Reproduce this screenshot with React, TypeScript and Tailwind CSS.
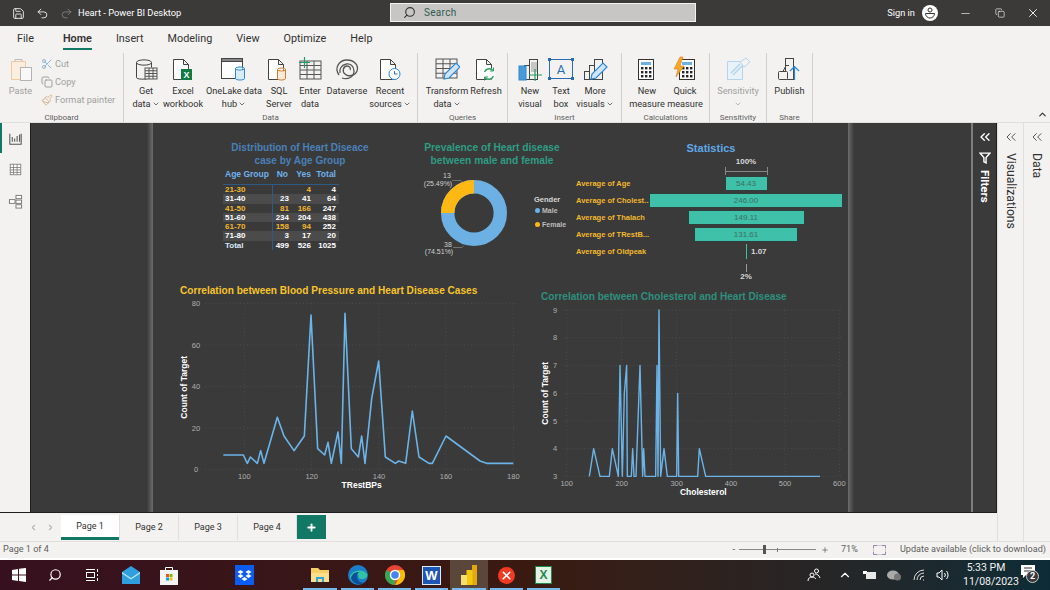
import React from 'react';
import { ChevronDown, ChevronUp, ChevronLeft, ChevronRight, ChevronsLeft, Copy, Minus, Paintbrush, Plus, Redo2, Save, Scissors, Search, Undo2, X } from 'lucide-react';

const ui = "font-['Roboto',sans-serif]";
const INK = '#323130';

/* ---------- ribbon icons ---------- */
const Ic: React.FC<{ children: React.ReactNode; w?: number }> = ({ children, w = 26 }) => (
  <svg width={w} height="26" viewBox={`0 0 ${w} 26`} fill="none" stroke="#444" strokeWidth="1">
    {children}
  </svg>
);

const Grid3 = ({ x, y, w, h, c = '#555' }: { x: number; y: number; w: number; h: number; c?: string }) => (
  <g stroke={c}>
    <rect x={x} y={y} width={w} height={h} fill="#f3f2f1" />
    {[1, 2, 3].map((i) => <line key={i} x1={x} x2={x + w} y1={y + (h * i) / 4} y2={y + (h * i) / 4} />)}
    {[1, 2].map((i) => <line key={i} x1={x + (w * i) / 3} x2={x + (w * i) / 3} y1={y} y2={y + h} />)}
  </g>
);
const Doc = ({ x = 4, s = '#444' }: { x?: number; s?: string }) => (
  <path d={`M${x + .5} 3.5h10l5 5v15h-15zM${x + 10.5} 3.5v5h5`} stroke={s} fill="#fff" />
);
const Pencil = ({ x = 0, y = 0 }: { x?: number; y?: number }) => (
  <g transform={`translate(${x} ${y})`}>
    <path d="M3 20l1-5L15 4l4 4L8 19z" fill="#cfe4f7" stroke="#2b88d8" strokeWidth="1.2" />
  </g>
);
const Bars = () => (
  <g>
    <rect x="12.5" y="3.5" width="8" height="20" fill="#f3f2f1" />
    <rect x="7.5" y="9.5" width="5" height="14" fill="#f3f2f1" />
    <rect x="2.5" y="15.5" width="5" height="8" fill="#f3f2f1" />
  </g>
);
const Calc = ({ x = 6 }: { x?: number }) => (
  <g>
    <rect x={x + .5} y="3.5" width="15" height="20" fill="#fff" stroke="#333" />
    <rect x={x + 3} y="6" width="10" height="3" fill="#6cb0e4" stroke="none" />
    {[0, 1, 2].map((r) => [0, 1, 2].map((c) => <rect key={`${r}${c}`} x={x + 3 + c * 4} y={11 + r * 4} width="2.4" height="2.4" fill="#222" stroke="none" />))}
  </g>
);

const icons: Record<string, React.ReactNode> = {
  getData: <Ic><path d="M3.500 6.500v15c0 2 9 2 11 1M3.500 6.500c0-3.500 15-3.500 15 0s-15 3.500-15 0M18.500 6.500v5" /><Grid3 x={12} y={12} w={12} h={11} /></Ic>,
  excel: <Ic><Doc x={3} /><rect x="11" y="13" width="11" height="11" fill="#107c41" stroke="none" /><text x="16.500" y="22" textAnchor="middle" fontSize="9" fontWeight="700" fill="#fff" stroke="none" fontFamily="Liberation Sans">X</text></Ic>,
  onelake: <Ic w={30}><rect x="2.500" y="2.500" width="21" height="20" fill="#fff" /><rect x="2.500" y="2.500" width="21" height="3" fill="#888" stroke="#444" /><path d="M16.500 12.500v10c0 2 9 2 9 0v-10M16.500 12.500c0-2 9-2 9 0s-9 2-9 0" fill="#d9ecfa" stroke="#2b88d8" /></Ic>,
  sql: <Ic><Doc x={2} /><path d="M11.500 13.500v9c0 2 8 2 8 0v-9M11.500 13.500c0-2 8-2 8 0s-8 2-8 0" fill="#fdeadb" stroke="#d87a2b" /></Ic>,
  enter: <Ic><Grid3 x={3} y={5} w={21} h={18} /><path d="M7.500 1v11M2 6.500h11" stroke="#1f9e5f" strokeWidth="1.200" /></Ic>,
  dataverse: <Ic><g stroke="#555" strokeWidth="1.300"><path d="M5 19C0 12 5 4 13 4c7 0 12 5 10 11-2 5-9 6-12 3-3-2-2-8 2-8 3 0 4 3 3 4" /><path d="M8 22c6 2 12-1 12-7 0-5-4-8-8-7-5 1-7 6-6 9" /></g></Ic>,
  recent: <Ic><Doc x={3} /><circle cx="17.500" cy="18" r="5.500" fill="#fff" stroke="#2b88d8" /><path d="M17.500 15v3h3" stroke="#2b6cb0" /></Ic>,
  transform: <Ic><Grid3 x={2} y={3} w={21} h={19} /><Pencil x={7} y={3} /></Ic>,
  refresh: <Ic><Doc x={3} /><circle cx="16" cy="18" r="6" fill="#fff" stroke="none" /><path d="M11.500 16a5 5 0 0 1 8.500-1.500M20.500 20a5 5 0 0 1-8.500 1.500" stroke="#2e9e5b" strokeWidth="1.400" /><path d="M20.500 11.500v3.500H17M11.500 24.500V21H15" stroke="#2e9e5b" /></Ic>,
  newVisual: <Ic><Bars /><rect x="2" y="10" width="7" height="14" fill="#4a9ad8" stroke="#2b88d8" /><rect x="14" y="6" width="6" height="10" fill="#c8c6c4" stroke="none" /><path d="M18 13v12M12 19h13" stroke="#1f9e5f" strokeWidth="1.200" /></Ic>,
  textBox: <Ic><rect x="1.500" y="3.500" width="23" height="19" stroke="#2b6cb0" fill="#f3f2f1" />{[[1.500, 3.500], [24.500, 3.500], [1.500, 22.500], [24.500, 22.500]].map(([a, b]) => <rect key={`${a}${b}`} x={a - 1.500} y={b - 1.500} width="3" height="3" fill="#2b6cb0" stroke="none" />)}<text x="13" y="18" textAnchor="middle" fontSize="13" fill="#2b6cb0" stroke="none" fontFamily="Roboto">A</text></Ic>,
  moreVisuals: <Ic><Bars /><Pencil x={6} y={3} /></Ic>,
  newMeasure: <Ic><Calc x={4} /></Ic>,
  quickMeasure: <Ic><Calc x={7} /><path d="M8 1L2 13h4l-2 8 8-11H8l3-9z" fill="#f7a823" stroke="#d87a2b" strokeWidth=".6" /></Ic>,
  sensitivity: <Ic><path d="M2.500 5.500h15v18h-15z" stroke="#b5d4ec" fill="#eaf2f9" /><path d="M6 17l9-9M8 19l9-9" stroke="#b5d4ec" strokeWidth="1.500" /><path d="M15 6l6-4 4 4-6 5z" stroke="#b5d4ec" fill="#f3f2f1" /></Ic>,
  publish: <Ic><rect x="8.500" y="2.500" width="8" height="21" fill="#f3f2f1" /><rect x="1.500" y="15.500" width="9" height="8" rx="1" fill="#f3f2f1" /><path d="M6 15.500l3-6h3" /><path d="M17.500 24V11M13 15l4.500-4.500L22 15" stroke="#2b88d8" strokeWidth="1.200" /></Ic>,
};

interface ItemProps { w: number; icon: string; lines: string[]; chev?: boolean; disabled?: boolean }
const RibbonItem: React.FC<ItemProps> = ({ w, icon, lines, chev, disabled }) => (
  <div style={{ width: w }} className="flex flex-col items-center shrink-0">
    <div className="h-[30px] flex items-start justify-center pt-[3px]">{icons[icon]}</div>
    <div className={`mt-px flex flex-col items-center text-[9.200px] leading-[13px] whitespace-nowrap ${disabled ? 'text-[#a19f9d]' : 'text-[#323130]'}`}>
      {lines.map((l, i) => (
        <span key={i} className="flex items-center gap-[1px] h-[13px]">
          {l}
          {chev && i === lines.length - 1 && <ChevronDown size={8} strokeWidth={2} />}
        </span>
      ))}
    </div>
  </div>
);

const RibbonGroup: React.FC<{ w: number; pl?: number; label: string; children: React.ReactNode }> = ({ w, pl = 0, label, children }) => (
  <div style={{ width: w }} className="shrink-0 h-[69px] border-r border-[#d2d0ce] flex flex-col">
    <div style={{ paddingLeft: pl }} className="flex flex-1 min-h-0">{children}</div>
    <div className="text-center text-[8px] leading-[11px] text-[#605e5c] -mb-px">{label}</div>
  </div>
);

/* ---------- report visuals ---------- */
const rows: [string, string, string, string, boolean][] = [
  ['21-30', '', '4', '4', true],
  ['31-40', '23', '41', '64', false],
  ['41-50', '81', '166', '247', true],
  ['51-60', '234', '204', '438', false],
  ['61-70', '158', '94', '252', true],
  ['71-80', '3', '17', '20', false],
];

const AgeTable = () => (
  <div className="w-[116px] text-[8px] font-bold leading-[9.250px] text-white">
    <div className="h-[10px] flex text-[8.500px] leading-[10px] text-[#6fb1ea]">
      <div className="w-[50px] pl-[2px] whitespace-nowrap">Age Group</div>
      <div className="w-[17px] text-right pr-[2px]">No</div>
      <div className="w-[22px] text-right pr-[1px]">Yes</div>
      <div className="w-[27px] text-right pr-[3px]">Total</div>
    </div>
    <div className="mt-[5px] border-t border-[#2d5a86]">
      {rows.map(([age, no, yes, total, warm], i) => (
        <div key={age} className={`h-[9.250px] flex ${i % 2 === 1 ? 'bg-[#4b4b4b]' : ''}`}>
          <div className={`w-[50px] pl-[2px] border-r border-[#2d5a86] ${warm ? 'text-[#f2b72e]' : ''}`}>{age}</div>
          <div className={`w-[17px] text-right pr-[1px] ${warm ? 'text-[#f2b72e]' : ''}`}>{no}</div>
          <div className={`w-[22px] text-right pr-[1px] ${warm ? 'text-[#f2b72e]' : ''}`}>{yes}</div>
          <div className="w-[27px] text-right pr-[3px]">{total}</div>
        </div>
      ))}
      <div className="h-[9.250px] flex">
        <div className="w-[50px] pl-[2px] border-r border-[#2d5a86] text-[#d7e9f8]">Total</div>
        <div className="w-[17px] text-right pr-[1px]">499</div>
        <div className="w-[22px] text-right pr-[1px]">526</div>
        <div className="w-[27px] text-right pr-[3px]">1025</div>
      </div>
    </div>
  </div>
);

const Donut = () => (
  <svg width="150" height="100" viewBox="0 0 150 100" className="font-['Liberation_Sans',sans-serif]">
    <circle cx="54" cy="46" r="26.300" fill="none" stroke="#6cb0e4" strokeWidth="13.400" />
    <path d="M27.700 46A26.300 26.300 0 0 1 54 19.700" fill="none" stroke="#fdb813" strokeWidth="13.400" />
    <path d="M32 13.500h9l2 2M33 80.500h9l2-2" fill="none" stroke="#8a8a8a" strokeWidth=".7" />
    <g fontSize="7" fill="#cfcfcf" textAnchor="middle">
      <text x="27" y="11">13</text>
      <text x="18" y="19">(25.49%)</text>
      <text x="28" y="80">38</text>
      <text x="19" y="87">(74.51%)</text>
    </g>
    <text x="114" y="34.500" fontSize="7.500" fontWeight="700" fill="#d6d6d6">Gender</text>
    <circle cx="117.500" cy="43.500" r="2.500" fill="#6cb0e4" />
    <text x="122" y="46" fontSize="7" fontWeight="700" fill="#bdbdbd">Male</text>
    <circle cx="117.500" cy="57.500" r="2.500" fill="#fdb813" />
    <text x="122" y="60" fontSize="7" fontWeight="700" fill="#bdbdbd">Female</text>
  </svg>
);

const stats = [
  { label: 'Average of Age', width: 43, value: '54.43' },
  { label: 'Average of Cholest...', width: 194, value: '246.00' },
  { label: 'Average of Thalach', width: 117, value: '149.11' },
  { label: 'Average of TRestB...', width: 104, value: '131.61' },
  { label: 'Average of Oldpeak', width: 1, value: '1.07' },
];

const Funnel = () => (
  <div className="w-[270px] text-[8px] font-bold">
    <div className="pl-[73px] w-[267px]">
      <div className="text-center h-[11px] leading-[11px] text-[#d8d8d8]">100%</div>
      <div className="mx-auto w-[43px] h-[8px] border-x border-[#888] flex items-center"><div className="w-full h-px bg-[#888]" /></div>
    </div>
    <div className="mt-[1px] flex flex-col gap-[2px]">
      {stats.map((s) => (
        <div key={s.label} className="h-[15px] flex items-center">
          <div className="w-[73px] shrink-0 whitespace-nowrap text-[#f2b72e] text-[7.500px]">{s.label}</div>
          <div className="w-[194px] h-full flex justify-center relative">
            {s.width > 1 ? (
              <div style={{ width: s.width }} className="h-full bg-[#3fc0a8] border border-[#2f3f3c] flex items-center justify-center text-[#3c6f64] font-normal">{s.value}</div>
            ) : (
              <>
                <div className="w-px h-full bg-[#3fc0a8]" />
                <span className="absolute left-[102px] top-[2px] text-[#d8d8d8]">{s.value}</span>
              </>
            )}
          </div>
        </div>
      ))}
    </div>
    <div className="pl-[73px] w-[267px] mt-[5px] flex flex-col items-center">
      <div className="w-px h-[8px] bg-[#999]" />
      <div className="leading-[10px] text-[#d8d8d8]">2%</div>
    </div>
  </div>
);

interface ChartProps {
  w: number; h: number; dy: number; pts: number[][]; stroke: number;
  vx: number[]; hy: number[]; x0: number; x1: number;
  xl: string[]; yl: string[]; ylx: number; xly: number;
  title: string; tx: number; ty: number; side: number; sideY: number;
}

// all coords below are read off a 3x crop, hence the /3
const LineChart: React.FC<ChartProps> = (c) => (
  <svg width={c.w} height={c.h} viewBox={`0 0 ${c.w} ${c.h}`} className="font-['Liberation_Sans',sans-serif] shrink-0">
    <g stroke="#555" strokeWidth=".7" strokeDasharray="1 2.500">
      {c.hy.map((y) => <line key={y} x1={c.x0 / 3} x2={c.x1 / 3} y1={y / 3 - c.dy} y2={y / 3 - c.dy} />)}
      {c.vx.map((x) => <line key={x} x1={x / 3} x2={x / 3} y1={c.hy[0] / 3 - c.dy} y2={c.hy[c.hy.length - 1] / 3 - c.dy} />)}
    </g>
    <polyline points={c.pts.map(([x, y]) => `${x / 3},${y / 3 - c.dy}`).join(' ')} fill="none" stroke="#6cb4e8" strokeWidth={c.stroke} strokeLinejoin="round" />
    <g fontSize="7.500" fill="#b0b0b0">
      {c.yl.map((t, i) => <text key={t} x={c.ylx / 3} y={c.hy[i] / 3 - c.dy + 2.500} textAnchor="middle">{t}</text>)}
      {c.xl.map((t, i) => <text key={t} x={c.vx[i] / 3} y={c.xly / 3 - c.dy + 2.500} textAnchor="middle">{t}</text>)}
    </g>
    <text x={c.tx / 3} y={c.ty / 3 - c.dy + 3} fontSize="8.500" fontWeight="700" fill="#fff" textAnchor="middle">{c.title}</text>
    <text transform={`translate(${c.side / 3 + 3} ${c.sideY / 3 - c.dy}) rotate(-90)`} fontSize="8.500" fontWeight="700" fill="#fff" textAnchor="middle">Count of Target</text>
  </svg>
);

const bpPts = [[190, 525], [250, 525], [262, 550], [271, 531], [292, 550], [302, 512], [312, 550], [352, 412], [372, 468], [402, 512], [433, 468], [453, 105], [473, 506], [494, 525], [504, 487], [514, 550], [534, 456], [544, 550], [555, 100], [574, 506], [595, 531], [605, 468], [615, 550], [635, 356], [656, 243], [676, 531], [706, 550], [716, 543], [737, 550], [757, 393], [777, 531], [807, 550], [817, 550], [858, 468], [960, 543], [980, 550], [1060, 550]];
const cholPts = [[178, 574], [191, 491], [210, 574], [238, 574], [247, 491], [265, 574], [270, 241], [277, 574], [283, 325], [290, 241], [292, 574], [304, 574], [308, 491], [312, 574], [318, 574], [330, 241], [338, 574], [341, 491], [345, 574], [377, 574], [381, 241], [384, 574], [387, 75], [392, 574], [402, 491], [412, 574], [440, 574], [443, 325], [446, 574], [503, 574], [508, 491], [527, 574], [870, 574]];

const Fade = ({ flip }: { flip?: boolean }) => (
  <div className={`w-[6px] shrink-0 ${flip ? 'bg-gradient-to-r from-[#6e6e6e] to-[#3a3a3a]' : 'bg-gradient-to-r from-[#3a3a3a] to-[#6e6e6e]'}`} />
);

const Report = () => (
  <div className="w-[695px] shrink-0 flex flex-col">
    <div className="h-[160px] flex">
      <div className="ml-[70px] w-[154px] shrink-0 pt-[18px]">
        <div className="text-center text-[10px] font-bold leading-[13px] text-[#4a80b8] whitespace-nowrap">Distribution of Heart Diseace<br />case by Age Group</div>
        <div className="mt-[2px]"><AgeTable /></div>
      </div>
      <div className="ml-[43px] w-[150px] shrink-0 pt-[18px]">
        <div className="w-[144px] text-center text-[10.200px] font-bold leading-[13px] text-[#2f9c84] whitespace-nowrap">Prevalence of Heart disease<br />between male and female</div>
        <Donut />
      </div>
      <div className="ml-[6px] w-[270px] shrink-0 pt-[19px]">
        <div className="w-[270px] text-center text-[11px] font-bold leading-[13px] text-[#5fa8e8] mb-[1px]">Statistics</div>
        <Funnel />
      </div>
    </div>
    <div className="flex pl-[7px]">
      <div className="w-[370px] shrink-0 pt-px">
        <div className="h-[14px] pl-[20px] text-[10.100px] font-bold leading-[14px] text-[#f6c42c] whitespace-nowrap">Correlation between Blood Pressure and Heart Disease Cases</div>
        <LineChart w={370} h={202} dy={18} pts={bpPts} stroke={1.600}
          vx={[253, 455, 657, 858, 1060]} hy={[70, 195, 320, 444, 568]} x0={135} x1={1075}
          xl={['100', '120', '140', '160', '180']} yl={['80', '60', '40', '20', '0']} ylx={108} xly={590}
          title="TRestBPs" tx={605} ty={615} side={72} sideY={322} />
      </div>
      <div className="w-[318px] shrink-0 pt-[7px]">
        <div className="h-[14px] pl-[11px] text-[10.100px] font-bold leading-[14px] text-[#2e8f7d] whitespace-nowrap">Correlation between Cholesterol and Heart Disease</div>
        <LineChart w={318} h={199} dy={19} pts={cholPts} stroke={1.400}
          vx={[110, 275, 440, 603, 765, 928]} hy={[75, 158, 241, 325, 408, 491, 574]} x0={100} x1={940}
          xl={['100', '200', '300', '400', '500', '600']} yl={['9', '8', '7', '6', '5', '4', '3']} ylx={75} xly={595}
          title="Cholesterol" tx={520} ty={621} side={45} sideY={325} />
      </div>
    </div>
  </div>
);

/* ---------- taskbar ---------- */
const TaskSlot: React.FC<{ w: number; active?: boolean; running?: boolean; children: React.ReactNode }> = ({ w, active, running, children }) => (
  <div style={{ width: w }} className={`h-full shrink-0 flex items-center justify-center relative ${active ? 'bg-[#5b463c]' : ''}`}>
    {children}
    {running && <div className="absolute bottom-0 left-[2px] right-[2px] h-[2px] bg-[#76b9ed]" />}
  </div>
);

const TaskBar = () => (
  <div className={`h-[30px] flex items-stretch bg-gradient-to-r from-[#37101f] via-[#3a1a10] to-[#0b2c36] ${ui}`}>
    <TaskSlot w={37}>
      <svg width="14" height="14" viewBox="0 0 14 14" fill="#fff"><path d="M0 2l6-1v5.500H0zM7 .8L14 0v6.500H7zM0 7.500h6V13l-6-1zM7 7.500h7V14l-7-1z" /></svg>
    </TaskSlot>
    <TaskSlot w={36}><Search size={14} color="#fff" className="-scale-x-100" /></TaskSlot>
    <TaskSlot w={38}>
      <svg width="14" height="14" viewBox="0 0 14 14" fill="none" stroke="#fff"><rect x="1.500" y="4.500" width="8" height="5" /><path d="M1 1.500h9M1 12.500h9M12.500 1v3M12.500 6v2M12.500 10v3" /></svg>
    </TaskSlot>
    <TaskSlot w={39}>
      <svg width="20" height="20" viewBox="0 0 20 20"><path d="M1 7l9-6 9 6v12H1z" fill="#2f9fe0" /><path d="M1 7l9 6 9-6v1.500l-9 6-9-6z" fill="#bfe3f7" /></svg>
    </TaskSlot>
    <TaskSlot w={38}>
      <svg width="18" height="20" viewBox="0 0 18 20"><path d="M5.500 5V2.500h7V5" fill="none" stroke="#fff" /><rect x="0" y="5" width="18" height="15" fill="#f4f4f4" /><rect x="6" y="9" width="3" height="3" fill="#f25022" /><rect x="9.500" y="9" width="3" height="3" fill="#7fba00" /><rect x="6" y="12.500" width="3" height="3" fill="#00a4ef" /><rect x="9.500" y="12.500" width="3" height="3" fill="#ffb900" /></svg>
    </TaskSlot>
    <div className="w-[37px] shrink-0" />
    <TaskSlot w={38}>
      <svg width="19" height="20" viewBox="0 0 19 20"><rect width="19" height="20" fill="#0d5cf0" /><path d="M5.500 5l3 2-3 2-3-2zM13.500 5l3 2-3 2-3-2zM5.500 9l3 2-3 2-3-2zM13.500 9l3 2-3 2-3-2zM9.500 12l3 2-3 2-3-2z" fill="#fff" /></svg>
    </TaskSlot>
    <div className="w-[38px] shrink-0" />
    <TaskSlot w={38} running>
      <svg width="18" height="16" viewBox="0 0 18 16"><path d="M0 1h7l2 2h9v12H0z" fill="#f5cf63" /><rect x="0" y="6" width="18" height="9" fill="#fbe08c" /><path d="M5 15v-5h8v5h-2v-3H7v3z" fill="#3aa0dc" /></svg>
    </TaskSlot>
    <TaskSlot w={37} running>
      <svg width="20" height="20" viewBox="0 0 20 20"><circle cx="10" cy="10" r="10" fill="#1a7fc8" /><path d="M2 12C3 5 15 3 19 9c1 3-2 5-5 5-4 0-4-2-3-4-4 0-6 5-1 9-4 0-7-3-8-7z" fill="#2ec4a5" /><path d="M3 13c1-4 4-6 8-6-2 2-3 6 0 9 2 2 4 2 6 1-6 5-13 1-14-4z" fill="#0f4f9a" /></svg>
    </TaskSlot>
    <TaskSlot w={37} running>
      <svg width="20" height="20" viewBox="0 0 20 20"><circle cx="10" cy="10" r="10" fill="#ea4335" /><path d="M10 10L1.400 5A10 10 0 0 0 10 20z" fill="#34a853" /><path d="M10 5h8.700A10 10 0 0 1 10 20l4.300-7.500z" fill="#fbbc05" /><circle cx="10" cy="10" r="4.500" fill="#4285f4" stroke="#fff" strokeWidth="1.500" /></svg>
    </TaskSlot>
    <TaskSlot w={37} running>
      <div className="w-[19px] h-[19px] bg-[#1d57b5] border border-[#dfe9f7] flex items-center justify-center text-white text-[13px] font-bold leading-none font-['Liberation_Sans',sans-serif]">W</div>
    </TaskSlot>
    <TaskSlot w={38} active running>
      <svg width="16" height="20" viewBox="0 0 16 20"><rect x="11" y="0" width="5" height="20" fill="#e2a711" /><rect x="5.500" y="5" width="6" height="15" fill="#f2c811" /><rect x="0" y="10" width="6" height="10" fill="#f7de6e" /></svg>
    </TaskSlot>
    <TaskSlot w={37} running>
      <div className="w-[17px] h-[17px] rounded-full bg-[#ef3a24] flex items-center justify-center"><X size={13} strokeWidth={3} color="#fff" /></div>
    </TaskSlot>
    <TaskSlot w={37} running>
      <div className="w-[17px] h-[18px] bg-[#e5f1e7] border border-[#1f8a4c] flex items-center justify-center text-[#1f8a4c] text-[12px] font-bold leading-none font-['Liberation_Sans',sans-serif]">X</div>
    </TaskSlot>
    <div className="flex-1" />
    <div className="flex items-center w-[246px] shrink-0 text-white">
      <svg width="14" height="14" viewBox="0 0 14 14" fill="none" stroke="#fff" className="ml-[3px]"><circle cx="5" cy="7" r="2" /><circle cx="9.500" cy="3" r="2" /><path d="M1 13c0-3 2-4 4-4s3 1 4 2M8 6c2 0 4 1 5 4" /></svg>
      <ChevronUp size={14} color="#fff" className="ml-[17px]" />
      <svg width="14" height="12" viewBox="0 0 14 12" className="ml-[11px]"><rect x="0" y="2" width="4" height="3" fill="#fff" /><rect x="3" y="3" width="10" height="7" fill="#e8e8e8" /></svg>
      <svg width="14" height="12" viewBox="0 0 14 12" className="ml-[10px]"><ellipse cx="6" cy="6" rx="6" ry="4.500" fill="#aaa" /><circle cx="10.500" cy="8" r="3.500" fill="#777" /></svg>
      <svg width="14" height="12" viewBox="0 0 14 12" fill="none" stroke="#ddd" className="ml-[12px]"><path d="M1 11a10 10 0 0 1 10-10M4 11a7 7 0 0 1 7-7M7 11a4 4 0 0 1 4-4M10 11h1" /></svg>
      <svg width="13" height="12" viewBox="0 0 13 12" fill="none" stroke="#fff" className="ml-[9px]"><path d="M1 4h2l3-3v10L3 8H1zM8.500 4a3 3 0 0 1 0 4M10.500 2a6 6 0 0 1 0 8" /></svg>
      <div className="ml-[14px] w-[46px] text-center text-[10.500px] leading-[14px] text-[#f2f2f2] whitespace-nowrap">5:33 PM<br />11/08/2023</div>
      <div className="ml-[12px] relative w-[20px] h-[20px]">
        <svg width="14" height="13" viewBox="0 0 14 13" fill="#fff"><path d="M0 0h14v10H5l-3 3v-3H0z" /><path d="M3 3h8M3 6h8" stroke="#333" /></svg>
        <div className="absolute left-[5px] top-[5px] w-[13px] h-[13px] rounded-full bg-[#3a3a3a] border border-[#ccc] text-white text-[9px] leading-[11px] text-center font-bold">2</div>
      </div>
    </div>
  </div>
);

/* ---------- shell ---------- */
export default function App() {
  return (
    <div className={`w-[1050px] h-[590px] overflow-hidden flex flex-col bg-[#f3f2f1] text-[#323130] ${ui}`}>
      {/* Title bar */}
      <div className="h-[26px] bg-[#3b3a39] flex items-center relative text-white shrink-0">
        <div className="flex items-center gap-[11px] pl-[12px]">
          <Save size={13} strokeWidth={1.500} />
          <Undo2 size={13} strokeWidth={1.500} />
          <Redo2 size={13} strokeWidth={1.500} className="text-[#8a8886]" />
        </div>
        <div className="ml-[5px] text-[9.300px]">Heart - Power BI Desktop</div>
        <div className="absolute left-[390px] top-[3px] w-[306px] h-[19px] bg-[#c8c6c4] border border-[#f3f2f1] flex items-center pl-[12px] text-[#2f5b50] text-[10px]">
          <Search size={13} className="-scale-x-100 text-[#323130]" />
          <span className="ml-[8px] tracking-[.3px]">Search</span>
        </div>
        <div className="ml-auto flex items-center">
          <span className="text-[9.300px]">Sign in</span>
          <svg width="16" height="16" viewBox="0 0 16 16" className="ml-[7px]"><circle cx="8" cy="8" r="8" fill="#fff" /><circle cx="8" cy="5" r="2" fill="none" stroke="#333" /><path d="M3.500 8.500h9a4.500 4.500 0 0 1-9 0z" fill="none" stroke="#333" /></svg>
          <Minus size={13} strokeWidth={1.500} className="ml-[21px] text-[#d0d0d0]" />
          <Copy size={10} strokeWidth={1.500} className="ml-[23px]" />
          <X size={14} strokeWidth={1.500} className="ml-[21px] mr-[10px]" />
        </div>
      </div>

      {/* Menu */}
      <div className="h-[26px] flex items-center pl-[17px] text-[10.800px] shrink-0">
        <span>File</span>
        <span className="ml-[29px] relative font-semibold">Home<span className="absolute left-0 right-0 top-[17px] h-[2px] bg-[#117865]" /></span>
        <span className="ml-[24px]">Insert</span>
        <span className="ml-[24px]">Modeling</span>
        <span className="ml-[24px]">View</span>
        <span className="ml-[24px]">Optimize</span>
        <span className="ml-[24px]">Help</span>
      </div>

      {/* Ribbon */}
      <div className="h-[70px] flex items-start pt-px relative shrink-0">
        <RibbonGroup w={124} label="Clipboard">
          <div className="w-[41px] flex flex-col items-center pt-[4px] text-[#a19f9d]">
            <svg width="22" height="25" viewBox="0 0 22 25" fill="none"><path d="M1.500 4.500h14v18h-14z" stroke="#f1c9a0" fill="#fbeede" /><path d="M5 4.500V2.500h7v2" stroke="#bbb" /><rect x="10.500" y="10.500" width="11" height="13" fill="#f8f8f8" stroke="#b5b3b1" /></svg>
            <span className="mt-[2px] text-[9.200px] leading-[13px]">Paste</span>
          </div>
          <div className="flex flex-col text-[9.200px] leading-[18px] text-[#a19f9d] pt-[2px]">
            <span className="flex items-center gap-[2px]"><Scissors size={12} className="text-[#8fb7d8]" /> Cut</span>
            <span className="flex items-center gap-[2px]"><Copy size={12} /> Copy</span>
            <span className="flex items-center gap-[2px] whitespace-nowrap"><Paintbrush size={12} className="text-[#d8b98f]" /> Format painter</span>
          </div>
        </RibbonGroup>
        <RibbonGroup w={294} pl={3} label="Data">
          <RibbonItem w={38} icon="getData" lines={['Get', 'data']} chev />
          <RibbonItem w={36} icon="excel" lines={['Excel', 'workbook']} />
          <RibbonItem w={66} icon="onelake" lines={['OneLake data', 'hub']} chev />
          <RibbonItem w={24} icon="sql" lines={['SQL', 'Server']} />
          <RibbonItem w={38} icon="enter" lines={['Enter', 'data']} />
          <RibbonItem w={36} icon="dataverse" lines={['Dataverse']} />
          <RibbonItem w={50} icon="recent" lines={['Recent', 'sources']} chev />
        </RibbonGroup>
        <RibbonGroup w={90} pl={7} label="Queries">
          <RibbonItem w={44} icon="transform" lines={['Transform', 'data']} chev />
          <RibbonItem w={34} icon="refresh" lines={['Refresh']} />
        </RibbonGroup>
        <RibbonGroup w={114} pl={7} label="Insert">
          <RibbonItem w={30} icon="newVisual" lines={['New', 'visual']} />
          <RibbonItem w={32} icon="textBox" lines={['Text', 'box']} />
          <RibbonItem w={36} icon="moreVisuals" lines={['More', 'visuals']} chev />
        </RibbonGroup>
        <RibbonGroup w={88} pl={5} label="Calculations">
          <RibbonItem w={40} icon="newMeasure" lines={['New', 'measure']} />
          <RibbonItem w={36} icon="quickMeasure" lines={['Quick', 'measure']} />
        </RibbonGroup>
        <RibbonGroup w={57} label="Sensitivity">
          <RibbonItem w={56} icon="sensitivity" lines={['Sensitivity', '']} chev disabled />
        </RibbonGroup>
        <RibbonGroup w={46} label="Share">
          <RibbonItem w={45} icon="publish" lines={['Publish']} />
        </RibbonGroup>
        <ChevronUp size={11} strokeWidth={2.500} className="absolute right-[2px] bottom-[2px]" color={INK} />
      </div>

      {/* Workspace */}
      <div className="h-[419px] flex shrink-0 border-t border-[#e1dfdd]">
        <div className="w-[997px] shrink-0 flex flex-col">
          <div className="h-[390px] flex border-b border-[#1f1f1f]">
            <div className="w-[30px] shrink-0 relative flex flex-col items-center gap-[18px] pt-[9px]">
              <div className="absolute left-0 top-0 w-[2px] h-[30px] bg-[#117865]" />
              <svg width="13" height="13" viewBox="0 0 16 16" fill="none" stroke="#555"><path d="M1 2v13h14V2M4 12V6M7 12V8M10 12V5M13 12V3" strokeWidth="1.300" /></svg>
              <svg width="13" height="13" viewBox="0 0 16 16" fill="#fff" stroke="#777"><rect x="1.500" y="1.500" width="13" height="13" /><path d="M1.500 5.500h13M1.500 8.500h13M1.500 11.500h13M5.500 1.500v13M10 1.500v13" /></svg>
              <svg width="15" height="15" viewBox="0 0 16 16" fill="#fff" stroke="#777"><rect x="8.500" y="1.500" width="6" height="3.500" /><rect x="1.500" y="6" width="6" height="4" /><rect x="8.500" y="6.500" width="6" height="3.500" /><rect x="8.500" y="11.500" width="6" height="3.500" /></svg>
            </div>
            <div className="w-[941px] shrink-0 flex bg-[#3a3a3a] border-l border-[#1f1f1f] font-['Liberation_Sans',sans-serif] overflow-hidden">
              <div className="w-[116px] shrink-0" />
              <Fade />
              <Report />
              <Fade flip />
              <div className="flex-1" />
            </div>
            <div className="w-[26px] shrink-0 bg-[#3a3a3a] border-l-2 border-[#7d7d7d] border-r border-r-[#1f1f1f] flex flex-col items-center pt-[6px] text-white">
              <ChevronsLeft size={16} strokeWidth={2} />
              <svg width="12" height="12" viewBox="0 0 11 11" fill="none" stroke="#fff" strokeWidth="1.300" className="mt-[7px]"><path d="M1 1h9L6.500 5v5L4.500 9V5z" /></svg>
              <div className="mt-[6px] text-[11.500px] font-bold [writing-mode:vertical-rl]">Filters</div>
            </div>
          </div>

          {/* Page tabs */}
          <div className="h-[28px] flex items-start pt-[2px]">
            <div className="w-[61px] h-[24px] shrink-0 flex items-center pl-[29px] gap-[8px] text-[#b5b3b1]">
              <ChevronLeft size={9} strokeWidth={3} />
              <ChevronRight size={9} strokeWidth={3} />
            </div>
            <div className="w-[58px] h-[25px] bg-white border-b-[3px] border-[#117865] flex items-center justify-center text-[9px] pt-[2px]">Page 1</div>
            {['Page 2', 'Page 3', 'Page 4'].map((p) => (
              <div key={p} className="w-[59px] h-[25px] border-l border-[#e1dfdd] flex items-center justify-center text-[9px]">{p}</div>
            ))}
            <div className="w-[30px] h-[24px] bg-[#117865] border-l border-[#e1dfdd] flex items-center justify-center text-white"><Plus size={11} strokeWidth={4} /></div>
          </div>
        </div>

        {/* Collapsed panes */}
        <div className="w-[26px] shrink-0 border-l border-[#e1dfdd] flex flex-col items-center pt-[6px]">
          <ChevronsLeft size={16} strokeWidth={1.500} className="text-[#555]" />
          <div className="mt-[8px] text-[12.200px] leading-none [writing-mode:vertical-rl] whitespace-nowrap">Visualizations</div>
        </div>
        <div className="w-[27px] shrink-0 border-l border-[#e1dfdd] flex flex-col items-center pt-[6px]">
          <ChevronsLeft size={16} strokeWidth={1.500} className="text-[#555]" />
          <div className="mt-[8px] text-[12.200px] leading-none [writing-mode:vertical-rl]">Data</div>
        </div>
      </div>

      {/* Status bar */}
      <div className="h-[17px] flex items-center border-t border-[#e1dfdd] pl-[3px] text-[9.100px] text-[#605e5c] shrink-0">
        <span>Page 1 of 4</span>
        <div className="ml-auto flex items-center">
          <span className="text-[#444]">-</span>
          <div className="ml-[4px] w-[77px] h-px bg-[#888] relative">
            <div className="absolute left-[24px] -top-[4px] w-[3px] h-[9px] bg-[#555]" />
            <div className="absolute left-[38px] -top-[1.500px] w-px h-[4px] bg-[#777]" />
          </div>
          <Plus size={8} strokeWidth={2} className="ml-[5px] text-[#555]" />
          <span className="ml-[12px]">71%</span>
          <svg width="13" height="10" viewBox="0 0 13 10" fill="none" stroke="#8764b8" className="ml-[15px]"><path d="M.5 3V.5H4M9 .5h3.500V3M12.500 7v2.500H9M4 9.500H.5V7" /><rect x=".5" y=".5" width="12" height="9" stroke="#a8a6a4" strokeWidth=".5" /></svg>
          <span className="ml-[14px] mr-[4px] whitespace-nowrap">Update available (click to download)</span>
        </div>
      </div>
      <div className="h-[2px] bg-white shrink-0" />
      <TaskBar />
    </div>
  );
}
